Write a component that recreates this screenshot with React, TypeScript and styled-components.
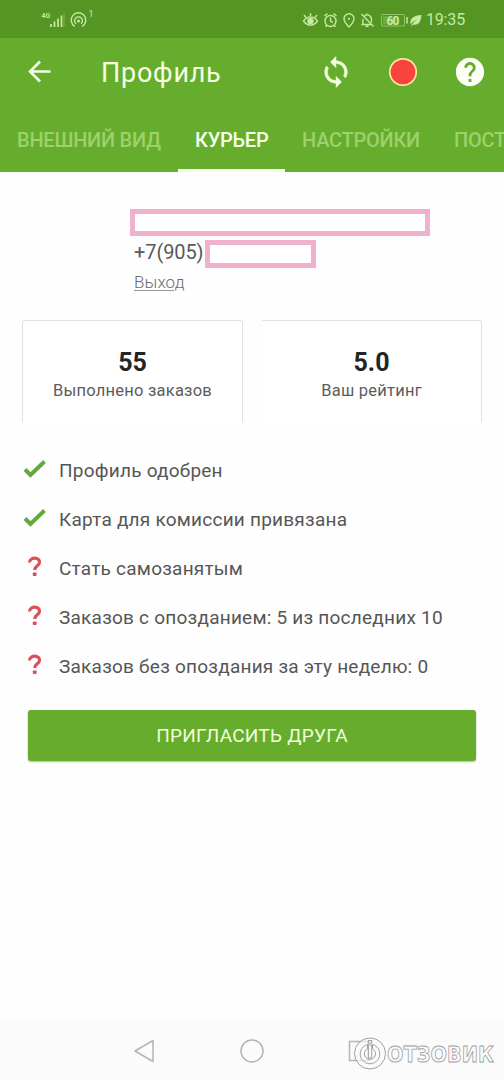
import React from "react";
import styled, { createGlobalStyle } from "styled-components";

const GlobalStyle = createGlobalStyle`
  * { box-sizing: border-box; }
  body { margin: 0; background: #fff; font-family: Roboto, "Liberation Sans", sans-serif; }
`;

const Screen = styled.div`
  width: 504px;
  height: 1080px;
  display: flex;
  flex-direction: column;
  overflow: hidden;
  background: #fefefe;
`;

const StatusBar = styled.div`
  height: 38px;
  flex: none;
  display: flex;
  align-items: center;
  justify-content: space-between;
  padding: 1px 39px 0 41px;
  background: #559524;
  color: #c5eaa2;
`;

const StatusGroup = styled.div`
  display: flex;
  align-items: center;
`;

const Clock = styled.span`
  font-size: 16px;
  line-height: 20px;
  margin-left: 3px;
  letter-spacing: -0.15px;
`;

const Header = styled.header`
  flex: none;
  height: 134px;
  display: flex;
  flex-direction: column;
  background: #67ad2d;
`;

const Toolbar = styled.div`
  height: 68px;
  display: flex;
  align-items: center;
  padding: 0 17px 0 27px;
`;

const Title = styled.h1`
  flex: 1;
  margin: 2px 0 0 49px;
  font-size: 27px;
  font-weight: 400;
  letter-spacing: 0.75px;
  color: #f4ffe4;
`;

const Actions = styled.div`
  display: flex;
  align-items: center;
  gap: 35px;
`;

const Tabs = styled.nav`
  height: 66px;
  display: flex;
  overflow: hidden;
`;

const Tab = styled.div<{ $active?: boolean; $width: number }>`
  flex: none;
  width: ${(p) => p.$width}px;
  padding-left: 17px;
  padding-top: 22px;
  border-bottom: 3px solid ${(p) => (p.$active ? "#fafff2" : "transparent")};
  font-size: 20px;
  line-height: 24px;
  font-weight: 500;
  letter-spacing: -0.24px;
  white-space: nowrap;
  color: ${(p) => (p.$active ? "#f7ffeb" : "#9dd16c")};
`;

const Content = styled.main`
  flex: 1;
  display: flex;
  flex-direction: column;
`;

const Account = styled.section`
  height: 148px;
  padding: 37px 0 0 130px;
`;

const Redacted = styled.div<{ $width: number; $height: number }>`
  width: ${(p) => p.$width}px;
  height: ${(p) => p.$height}px;
  border: 5px solid #efb1cb;
  background: #fff;
`;

const PhoneRow = styled.div`
  display: flex;
  height: 28px;
  margin-top: 4px;
  padding-left: 4px;
`;

const Phone = styled.span`
  width: 71px;
  font-size: 20px;
  line-height: 24px;
  letter-spacing: -0.1px;
  color: #58595a;
  white-space: nowrap;
`;

const Logout = styled.a`
  display: inline-block;
  margin: 3px 0 0 4px;
  font-size: 17px;
  line-height: 22px;
  font-weight: 300;
  letter-spacing: 0.1px;
  color: #6c6c6c;
  text-decoration: underline;
  text-decoration-color: #999;
  text-decoration-thickness: 1px;
  text-underline-offset: 2px;
`;

const Stats = styled.section`
  display: flex;
  gap: 18px;
  padding: 0 22px;
`;

const StatCard = styled.div<{ $openLeft?: boolean }>`
  flex: 1;
  height: 102px;
  padding-top: 27px;
  text-align: center;
  border: 1px solid #e0e0e0;
  border-bottom: none;
  border-left-color: ${(p) => (p.$openLeft ? "#fafafa" : "#e0e0e0")};
  border-radius: 3px 3px 0 0;
  background: #fff;
`;

const StatValue = styled.div`
  font-size: 25px;
  line-height: 30px;
  font-weight: 700;
  color: #242424;
`;

const StatLabel = styled.div`
  margin-top: 2px;
  font-size: 16.5px;
  line-height: 22px;
  letter-spacing: 0.22px;
  color: #5c5c5c;
`;

const Checklist = styled.ul`
  list-style: none;
  margin: 24px 0 0;
  padding: 0 0 0 22px;
`;

const CheckItem = styled.li`
  display: flex;
  align-items: center;
  height: 49px;
  font-size: 19px;
  letter-spacing: 0.23px;
  color: #565656;
  white-space: nowrap;
`;

const MarkSlot = styled.span`
  width: 37px;
  height: 33px;
  flex: none;
  display: flex;
`;

const InviteButton = styled.button`
  height: 51px;
  margin: 19px 28px 0;
  border: 0;
  border-radius: 3px;
  background: #67ad2d;
  box-shadow: 0 1px 2px rgba(70, 120, 30, 0.45);
  font-family: inherit;
  font-size: 19px;
  letter-spacing: 0.25px;
  color: #f0ffdc;
`;

const NavBar = styled.footer`
  position: relative;
  flex: none;
  height: 60px;
  background: #fbfbfb;
`;

const NavIcons = styled.svg`
  display: block;
`;

const Watermark = styled.svg`
  position: absolute;
  right: 0;
  top: 0;
`;

function SignalIcons() {
  return (
    <svg width="54" height="24" viewBox="41 7 54 24" fill="none" stroke="currentColor">
      <text x="41.5" y="17" fontSize="8" fontWeight="700" fill="currentColor" stroke="none" textLength="8.500" lengthAdjust="spacingAndGlyphs">4G</text>
      <path d="M51 23v3M54.500 20.500V26M58 17.500V26M61.500 14.500V26" strokeWidth="1.700" />
      <path d="M64 12v14" strokeWidth="1" opacity=".35" />
      <circle cx="78.500" cy="20" r="1.500" fill="currentColor" stroke="none" />
      <path d="M74.800 25.400a7.300 7.300 0 1 1 7.400 0M76 22.800a3.900 3.900 0 1 1 5 0" strokeWidth="1.400" />
      <text x="88.500" y="15.500" fontSize="9" fill="currentColor" stroke="none">1</text>
    </svg>
  );
}

function SystemIcons() {
  return (
    <svg width="121" height="24" viewBox="302 7 121 24" fill="none" stroke="currentColor" strokeWidth="1.400">
      <path d="M303.500 20c4-5.500 10-5.500 14 0-4 5.500-10 5.500-14 0Z" />
      <circle cx="310.500" cy="20" r="2.500" fill="currentColor" />
      <path d="m304 14 2 2.500M310.500 12v3M317 14l-2 2.500" />
      <circle cx="330.500" cy="20" r="5.500" />
      <path d="M330.500 16.500V20l2.500 1.500M324.500 15l3-2.500M336.500 15l-3-2.500M327 24l-1.500 1.800M334 24l1.500 1.800" />
      <path d="M349 26c-3-3-5-5.600-5-8.200a5 5 0 0 1 10 0c0 2.600-2 5.200-5 8.200Z" />
      <circle cx="349" cy="17.800" r="1.100" fill="currentColor" stroke="none" />
      <path d="M361.500 23.500h10M363 23.500v-5.500M364.500 15c3-2.500 7-.500 7 4v2.500M366.800 12.500v1.500M361.500 13l12 12.500M365.500 25.300h3" />
      <rect x="381.500" y="13.500" width="23" height="11.500" rx="1" strokeWidth="1" opacity=".55" />
      <rect x="383" y="15" width="15" height="8.500" fill="currentColor" stroke="none" opacity=".25" />
      <path d="M407 16v6.500" strokeWidth="1.500" />
      <text x="386.500" y="23.500" fontSize="12" fontWeight="700" fill="currentColor" stroke="none" textLength="13">60</text>
      <path d="M411 25c1-2 3-4.500 6-6.500-4 1.500-5.500 3.500-6.500 5-1-6 3-9 11-9.500-.500 7-3 10.500-8.500 9.500l-1 1.500Z" fill="currentColor" stroke="none" />
    </svg>
  );
}

function BackIcon() {
  return (
    <svg width="25" height="24" viewBox="27 60 25 24" fill="none" stroke="#f4ffe4" strokeWidth="2.600">
      <path d="M50.500 71.500H30M40 61.500l-10 10 10 10" />
    </svg>
  );
}

function SyncIcon() {
  return (
    <svg width="34" height="34" viewBox="0 0 24 24" fill="#f0ffe0" stroke="#f0ffe0" strokeWidth=".3">
      <path d="M12 4V1L8 5l4 4V6c3.310 0 6 2.690 6 6 0 1.010-.250 1.970-.700 2.800l1.460 1.460C19.540 15.030 20 13.570 20 12c0-4.420-3.580-8-8-8zm0 14c-3.310 0-6-2.690-6-6 0-1.010.250-1.970.700-2.800L5.240 7.740C4.460 8.970 4 10.430 4 12c0 4.420 3.580 8 8 8v3l4-4-4-4v3z" />
    </svg>
  );
}

function RecordIcon() {
  return (
    <svg width="30" height="30" viewBox="0 0 30 30">
      <circle cx="15" cy="15" r="13.200" fill="#f8443f" stroke="#fde69c" strokeWidth="1.700" />
    </svg>
  );
}

function HelpIcon() {
  return (
    <svg width="34" height="34" viewBox="0 0 24 24" fill="#fbfff5">
      <path d="M12 2C6.480 2 2 6.480 2 12s4.480 10 10 10 10-4.480 10-10S17.520 2 12 2zm1 17h-2v-2h2v2zm2.070-7.750-.900.920C13.450 12.900 13 13.500 13 15h-2v-.500c0-1.100.450-2.100 1.170-2.830l1.240-1.260c.370-.360.590-.860.590-1.410 0-1.100-.900-2-2-2s-2 .900-2 2H8c0-2.210 1.790-4 4-4s4 1.790 4 4c0 .880-.360 1.680-.930 2.250z" />
    </svg>
  );
}

function CheckMark() {
  return (
    <svg width="25" height="30" viewBox="0 0 25 30">
      <path d="m3 15.500 5.500 5.500L22.500 7.500" fill="none" stroke="#64a83c" strokeWidth="4" />
    </svg>
  );
}

function QuestionMark() {
  return (
    <svg width="25" height="30" viewBox="0 0 25 30">
      <path d="M7.500 10.500c.3-6 10.500-5.500 10 0-.200 3.300-4.800 3.400-4.800 7.500" fill="none" stroke="#d95058" strokeWidth="3.200" />
      <rect x="10.800" y="20.500" width="3.800" height="3.600" rx=".8" fill="#d95058" />
    </svg>
  );
}

const items = [
  { done: true, text: "Профиль одобрен" },
  { done: true, text: "Карта для комиссии привязана" },
  { done: false, text: "Стать самозанятым" },
  { done: false, text: "Заказов с опозданием: 5 из последних 10" },
  { done: false, text: "Заказов без опоздания за эту неделю: 0" },
];

export default function App() {
  return (
    <>
      <GlobalStyle />
      <Screen>
        <StatusBar>
          <SignalIcons />
          <StatusGroup>
            <SystemIcons />
            <Clock>19:35</Clock>
          </StatusGroup>
        </StatusBar>
        <Header>
          <Toolbar>
            <BackIcon />
            <Title>Профиль</Title>
            <Actions>
              <SyncIcon />
              <RecordIcon />
              <HelpIcon />
            </Actions>
          </Toolbar>
          <Tabs>
            <Tab $width={178}>ВНЕШНИЙ ВИД</Tab>
            <Tab $width={107} $active>КУРЬЕР</Tab>
            <Tab $width={152}>НАСТРОЙКИ</Tab>
            <Tab $width={67}>ПОСТ</Tab>
          </Tabs>
        </Header>
        <Content>
          <Account>
            <Redacted $width={300} $height={27} />
            <PhoneRow>
              <Phone>+7(905)</Phone>
              <Redacted $width={111} $height={28} />
            </PhoneRow>
            <Logout>Выход</Logout>
          </Account>
          <Stats>
            <StatCard>
              <StatValue>55</StatValue>
              <StatLabel>Выполнено заказов</StatLabel>
            </StatCard>
            <StatCard $openLeft>
              <StatValue>5.0</StatValue>
              <StatLabel>Ваш рейтинг</StatLabel>
            </StatCard>
          </Stats>
          <Checklist>
            {items.map((item) => (
              <CheckItem key={item.text}>
                <MarkSlot>{item.done ? <CheckMark /> : <QuestionMark />}</MarkSlot>
                {item.text}
              </CheckItem>
            ))}
          </Checklist>
          <InviteButton>ПРИГЛАСИТЬ ДРУГА</InviteButton>
        </Content>
        <NavBar>
          <NavIcons width="504" height="60" viewBox="0 1020 504 60" fill="none" stroke="#b4b4b4" strokeWidth="1.500">
            <path d="M153 1040.500v21l-18-10.500Z" strokeLinejoin="round" />
            <circle cx="252" cy="1051" r="11" />
            <rect x="349.500" y="1041.500" width="19" height="19" />
          </NavIcons>
          <Watermark width="160" height="60" viewBox="344 1020 160 60" fill="none" stroke="#a0a0a0" strokeWidth="1">
            <circle cx="370" cy="1053.500" r="15.500" fill="#fbfbfb" fillOpacity=".6" />
            <path d="M367.500 1044.500a9.800 9.800 0 1 0 5 0v4.300a5.600 5.600 0 1 1-5 0Z" />
            <rect x="368.300" y="1040.500" width="3.400" height="2.500" />
            <rect x="368.300" y="1045" width="3.400" height="13" />
            <text x="387" y="1061.500" fontFamily="DejaVu Sans" fontWeight="700" fontSize="20.500" textLength="107" lengthAdjust="spacingAndGlyphs" strokeWidth=".8">ОТЗОВИК</text>
          </Watermark>
        </NavBar>
      </Screen>
    </>
  );
}
